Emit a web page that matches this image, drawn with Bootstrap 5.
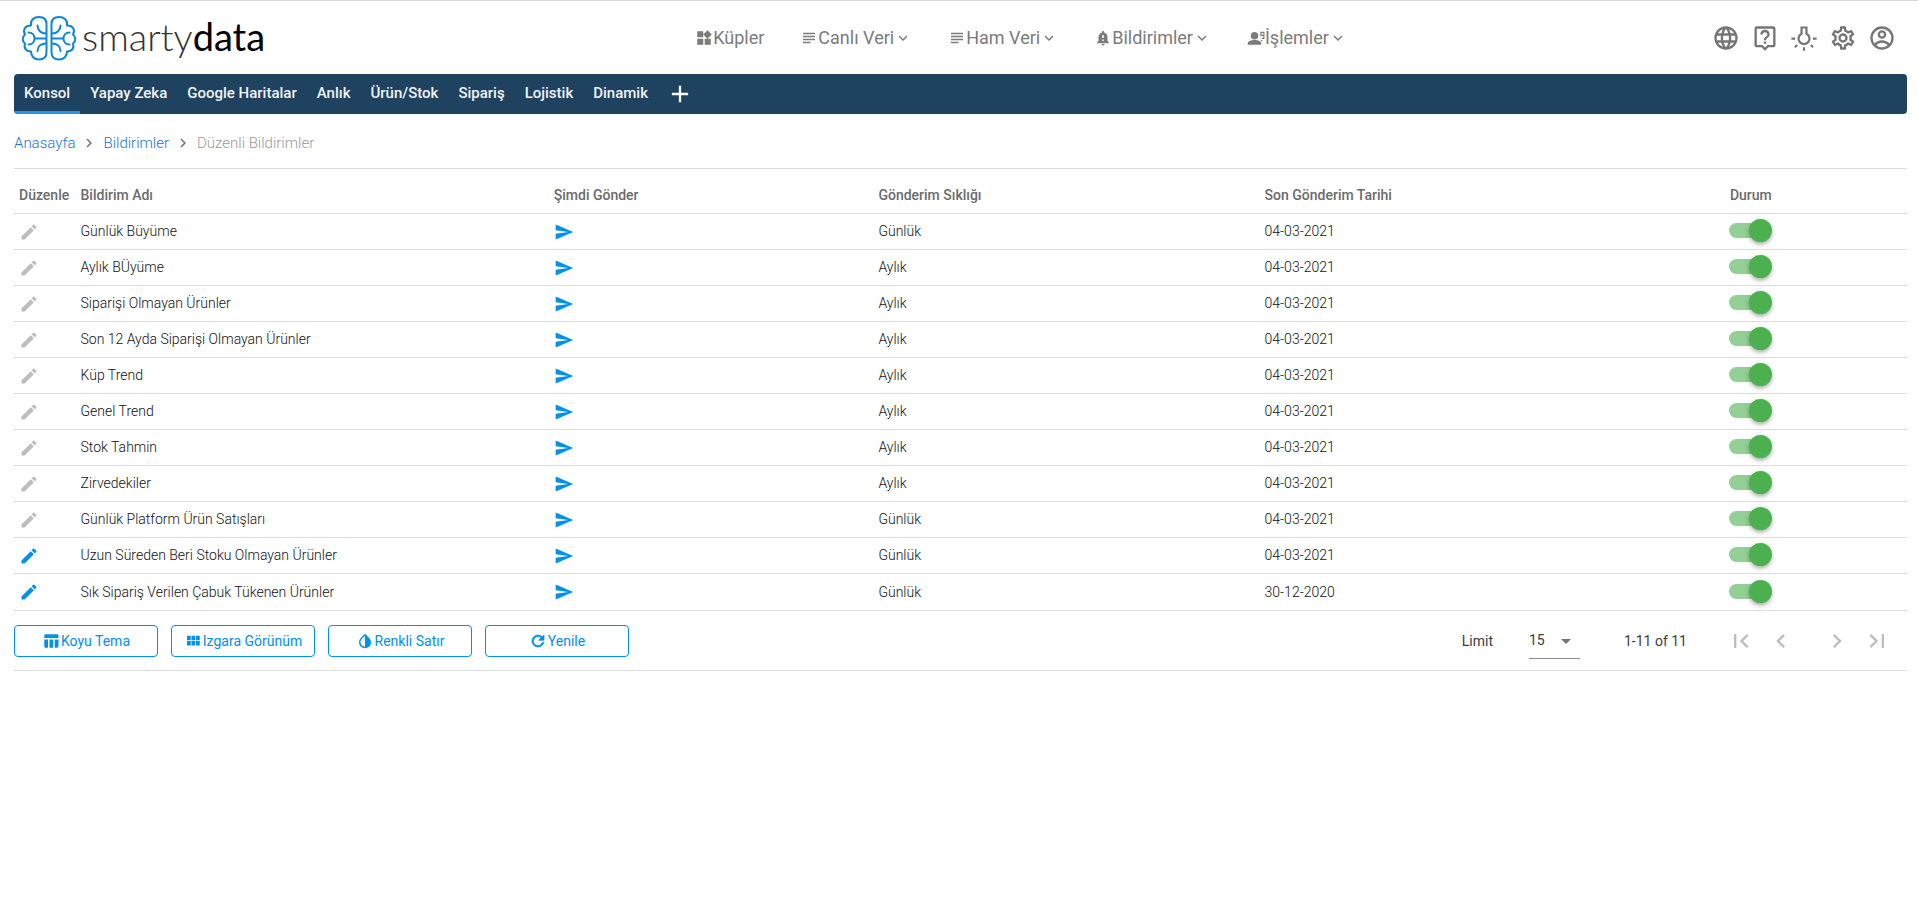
<!DOCTYPE html>
<html lang="tr">
<head>
<meta charset="utf-8">
<meta name="viewport" content="width=device-width, initial-scale=1">
<title>smartydata - Düzenli Bildirimler</title>
<link href="https://cdn.jsdelivr.net/npm/bootstrap@5.3.0/dist/css/bootstrap.min.css" rel="stylesheet">
<style>
  body { font-family: Roboto, "Noto Sans", sans-serif; font-size: 14px; line-height: 20px; color: #3c3c3c; background: #fff; border-top: 1px solid #d9d9de; }
  svg { fill: currentColor; flex: none; display: block; }
  .page { padding: 0 11px 0 14px; }
  .topbar { height: 73px; padding: 0 11px 0 6px; }
  .brand { color: #000; gap: 5px; margin-right: 65px; }
  .brand-text { font-family: Lato, sans-serif; font-size: 38px; line-height: 44px; padding-bottom: 4px; font-weight: 300; }
  .brand-text span { color: #333; }
  .brand-text b { font-weight: 400; }
  .main-menu { gap: 36px; }
  .main-menu .btn { font-size: 18px; line-height: 24px; color: #7b7b7b; }
  .tool-icons { gap: 11px; }
  .tool-icons .btn { color: #757575; }
  .tabs { background: #1e425f; border-radius: 4px; height: 40px; font-size: 15px; font-weight: 500; }
  .tabs a { color: #f1f4f6; padding: 2px 10px 0; line-height: 35px; border-bottom: 3px solid transparent; }
  .tabs a.active { border-color: #2196f3; }
  .crumbs { height: 54px; font-size: 15px; font-weight: 300; padding-top: 4px; }
  .crumbs a { color: #1976d2; }
  .crumbs .current { color: #999; }
  .crumbs svg { color: #757575; margin: 0 3px; }
  .grid { border-top: 1px solid #dcdcdc; table-layout: fixed; }
  .grid th { height: 45px; padding: 8px 5px 0; font-weight: 500; color: #6b6b6b; border-bottom: 1px solid #dcdcdc; }
  .grid td { height: 36px; padding: 0 5px 1px; border-bottom: 1px solid #dcdcdc; vertical-align: middle; white-space: nowrap; font-weight: 300; color: #111; }
  .grid tr:last-child td { height: 37px; }
  .icon-btn, .icon-btn:disabled { color: #0091ea; opacity: 1; }
  .icon-btn:disabled { color: #bdbdbd; }
  .toggle { appearance: none; display: block; width: 43px; height: 23px; margin: 0 auto 1px; position: relative; border-radius: 12px; }
  .toggle::before { content: ""; position: absolute; left: 0; top: 4px; width: 36px; height: 15px; border-radius: 8px; background: #94cf96; }
  .toggle::after { content: ""; position: absolute; right: 0; top: 0; width: 23px; height: 23px; border-radius: 50%; background: #4caf50; box-shadow: 0 3px 4px -1px rgba(0,0,0,.3), 0 1px 6px rgba(0,0,0,.14); }
  .grid-foot { height: 60px; border-bottom: 1px solid #dcdcdc; }
  .tool-group { gap: 13px; }
  .tool-btn { width: 144px; height: 32px; border: 1px solid #0091ea; border-radius: 4px; color: #0091ea; gap: 1px; font-size: 14px; line-height: 20px; }
  .limit-box { width: 51px; height: 36px; border: 0; border-bottom: 1px solid #8c8c8c; appearance: none; background: transparent; color: inherit; padding: 0; }
  .limit-wrap { position: relative; }
  .limit-wrap svg { position: absolute; right: 2px; top: 6px; color: #757575; pointer-events: none; }
  .pager { padding-right: 16px; }
  .pager .btn, .pager .btn:disabled { color: #bdbdbd; opacity: 1; }
  .page-prev { margin: 0 14px 0 12px; }
  .page-next { margin: 0 12px 0 14px; }
</style>
</head>
<body>
<svg class="d-none" aria-hidden="true">
  <symbol id="i-down" viewBox="0 0 24 24"><path d="M16.59 8.59 12 13.17 7.41 8.59 6 10l6 6 6-6z"/></symbol>
  <symbol id="i-right" viewBox="0 0 24 24"><path d="M10 6 8.59 7.41 13.17 12l-4.58 4.59L10 18l6-6z"/></symbol>
  <symbol id="i-left" viewBox="0 0 24 24"><path d="M15.41 7.41 14 6l-6 6 6 6 1.41-1.41L10.83 12z"/></symbol>
  <symbol id="i-subject" viewBox="0 0 24 24"><path d="M14 17H4v2h10v-2zm6-8H4v2h16V9zM4 15h16v-2H4v2zM4 5v2h16V5H4z"/></symbol>
  <symbol id="i-edit" viewBox="0 0 24 24"><path d="M3 17.25V21h3.75L17.81 9.94l-3.75-3.75L3 17.25zM20.71 7.04a1 1 0 0 0 0-1.41l-2.34-2.34a1 1 0 0 0-1.41 0l-1.83 1.83 3.75 3.75 1.83-1.83z"/></symbol>
  <symbol id="i-send" viewBox="0 0 24 24"><path d="M2.01 21 23 12 2.01 3 2 10l15 2-15 2z"/></symbol>
</svg>
<div class="page">
  <header class="topbar d-flex align-items-center justify-content-between">
    <a href="#" class="brand d-flex align-items-center text-decoration-none">
      <svg width="57" height="48" viewBox="0 0 57 48" style="fill:none" stroke="#0d87cf" stroke-width="2" stroke-linecap="round" stroke-linejoin="round">
        <g id="half">
          <path d="M26.500 10V38C26.500 43 23.500 45.500 19 45.500 14 45.500 11 42 11 37.500 6 37.500 3.500 34 5 29.500 2 27.500 2 23 5 20.500 2.500 16 5 11.500 11 11.500 10 6 14 3 19 3 23.500 3 26.500 5.500 26.500 10z"/>
          <path d="M26 24.500H14.500M8.500 18.500C12 18.500 14.500 21 14.500 24.500S12 30.500 8.500 30.500M17.500 11.500C17.500 16 21 19.500 26 19.500M17.500 37C17.500 32.500 21 29.500 26 29.500"/>
        </g>
        <use href="#half" transform="translate(58 0) scale(-1 1)"/>
      </svg>
      <span class="brand-text"><span>smarty</span><b>data</b></span>
    </a>
    <nav class="main-menu d-flex">
      <button class="btn p-0 border-0 d-flex align-items-center"><svg width="18" height="18" viewBox="0 0 24 24"><path d="M13 13v8h8v-8h-8zM3 21h8v-8H3v8zM3 3v8h8V3H3zm13.66-1.31L11 7.34 16.66 13l5.66-5.66-5.66-5.65z"/></svg>Küpler</button>
      <button class="btn p-0 border-0 d-flex align-items-center"><svg width="18" height="18"><use href="#i-subject"/></svg>Canlı Veri<svg width="18" height="18"><use href="#i-down"/></svg></button>
      <button class="btn p-0 border-0 d-flex align-items-center"><svg width="18" height="18"><use href="#i-subject"/></svg>Ham Veri<svg width="18" height="18"><use href="#i-down"/></svg></button>
      <button class="btn p-0 border-0 d-flex align-items-center"><svg width="18" height="18" viewBox="0 0 24 24"><path d="M18 16v-5c0-3.07-1.64-5.64-4.5-6.32V4a1.5 1.5 0 0 0-3 0v.68C7.63 5.36 6 7.92 6 11v5l-2 2v1h16v-1l-2-2zm-5 0h-2v-2h2v2zm0-4h-2V8h2v4zm-1 10a2 2 0 0 0 2-2h-4a2 2 0 0 0 2 2z"/></svg>Bildirimler<svg width="18" height="18"><use href="#i-down"/></svg></button>
      <button class="btn p-0 border-0 d-flex align-items-center"><svg width="18" height="18" viewBox="0 0 24 24"><circle cx="10" cy="9" r="5"/><path d="M1 21v-2c0-3 5-4.500 9-4.500s9 1.500 9 4.500v2z"/><path d="M18.500 4.500h4v4h-4zM22.500 8.500v4h-3M18.500 15.500h2" fill="none" stroke="currentColor" stroke-width="1.500"/></svg>İşlemler<svg width="18" height="18"><use href="#i-down"/></svg></button>
    </nav>
    <div class="tool-icons d-flex">
      <button class="btn p-0 border-0" aria-label="Dil"><svg width="28" height="28" viewBox="0 0 24 24"><path d="M11.99 2C6.47 2 2 6.48 2 12s4.47 10 9.99 10C17.52 22 22 17.52 22 12S17.520 2 11.990 2zm6.930 6h-2.950a15.650 15.650 0 0 0-1.380-3.560A8.030 8.030 0 0 1 18.920 8zM12 4.040c.830 1.200 1.480 2.530 1.910 3.960h-3.820c.430-1.430 1.080-2.760 1.910-3.960zM4.260 14C4.100 13.360 4 12.690 4 12s.100-1.360.260-2h3.380c-.080.660-.140 1.320-.140 2s.060 1.340.140 2H4.260zm.820 2h2.950c.320 1.250.780 2.450 1.380 3.560A7.990 7.990 0 0 1 5.080 16zm2.950-8H5.080a7.990 7.990 0 0 1 4.330-3.560A15.650 15.650 0 0 0 8.030 8zM12 19.960c-.830-1.200-1.480-2.530-1.910-3.960h3.820c-.430 1.430-1.080 2.760-1.910 3.960zM14.340 14H9.660c-.090-.660-.160-1.320-.160-2s.070-1.350.160-2h4.680c.090.650.160 1.320.160 2s-.070 1.340-.160 2zm.250 5.560c.600-1.110 1.060-2.310 1.380-3.560h2.950a8.030 8.030 0 0 1-4.330 3.560zM16.360 14c.080-.660.140-1.320.140-2s-.060-1.340-.140-2h3.380c.160.640.260 1.310.260 2s-.100 1.360-.260 2h-3.380z"/></svg></button>
      <button class="btn p-0 border-0" aria-label="Yardım"><svg width="28" height="28" viewBox="0 0 24 24"><path d="M19 2H5a2 2 0 0 0-2 2v14c0 1.100.900 2 2 2h4l3 3 3-3h4c1.100 0 2-.900 2-2V4c0-1.100-.900-2-2-2zm0 16h-4.830L12 20.170 9.830 18H5V4h14v14zm-8-3h2v2h-2zm1-8c1.100 0 2 .900 2 2 0 2-3 1.750-3 5h2c0-2.250 3-2.500 3-5 0-2.210-1.790-4-4-4S8 6.790 8 9h2c0-1.100.900-2 2-2z"/></svg></button>
      <button class="btn p-0 border-0" aria-label="Tema"><svg width="28" height="28" viewBox="0 0 24 24"><path d="M9.900 3v5.300a4.700 4.700 0 1 0 4.200 0V3z" fill="none" stroke="currentColor" stroke-width="1.900"/><path d="M11.100 20h1.800v3h-1.800zM1.200 11.600h3.200v1.800H1.200zM19.600 11.600h3.200v1.800h-3.200zM17.200 18.600l1.300-1.300 1.900 1.900-1.300 1.300zM6.800 18.600l-1.300-1.300-1.900 1.900 1.300 1.300z"/></svg></button>
      <button class="btn p-0 border-0" aria-label="Ayarlar"><svg width="28" height="28" viewBox="0 0 24 24"><path d="M19.430 12.980c.040-.320.070-.640.070-.980s-.030-.660-.070-.980l2.110-1.650c.190-.150.240-.420.120-.640l-2-3.460a.500.500 0 0 0-.610-.220l-2.490 1a7.300 7.300 0 0 0-1.690-.980l-.380-2.650A.49.49 0 0 0 14 2h-4a.49.49 0 0 0-.490.420l-.380 2.650c-.610.250-1.170.590-1.690.980l-2.490-1a.500.500 0 0 0-.610.220l-2 3.460c-.130.220-.070.490.120.640l2.110 1.650a7.930 7.930 0 0 0 0 1.960l-2.110 1.650a.500.500 0 0 0-.120.640l2 3.460c.120.220.390.290.610.220l2.490-1c.520.400 1.080.730 1.690.980l.380 2.650c.030.240.240.420.490.420h4c.250 0 .460-.180.490-.420l.380-2.650c.610-.250 1.170-.590 1.690-.980l2.490 1c.230.090.490 0 .610-.220l2-3.460a.500.500 0 0 0-.120-.640l-2.110-1.650zm-1.980-1.710c.040.310.050.520.050.730 0 .210-.020.430-.050.730l-.140 1.130.890.700 1.080.840-.700 1.210-1.270-.510-1.040-.420-.900.680c-.430.320-.840.560-1.250.730l-1.060.430-.160 1.130-.200 1.350h-1.400l-.190-1.350-.160-1.130-1.060-.430a5.670 5.670 0 0 1-1.230-.710l-.910-.700-1.060.430-1.270.510-.700-1.210 1.080-.840.890-.700-.140-1.130c-.030-.310-.050-.540-.050-.740s.020-.430.050-.730l.140-1.130-.890-.700-1.080-.840.700-1.210 1.270.510 1.040.420.900-.680c.430-.320.840-.560 1.250-.730l1.060-.430.160-1.130.200-1.350h1.390l.190 1.350.160 1.130 1.060.430c.430.180.830.410 1.230.710l.910.700 1.060-.430 1.270-.510.700 1.210-1.070.850-.890.700.140 1.130zM12 8a4 4 0 1 0 0 8 4 4 0 0 0 0-8zm0 6a2 2 0 1 1 0-4 2 2 0 0 1 0 4z"/></svg></button>
      <button class="btn p-0 border-0" aria-label="Hesap"><svg width="28" height="28" viewBox="0 0 24 24"><g fill="none" stroke="currentColor" stroke-width="2"><circle cx="12" cy="12" r="9"/><circle cx="12" cy="9" r="2.700"/><path d="M5.500 18c2-2 4-3 6.500-3s4.500 1 6.500 3"/></g></svg></button>
    </div>
  </header>

  <nav class="tabs d-flex overflow-hidden">
    <a href="#" class="active text-decoration-none">Konsol</a>
    <a href="#" class="text-decoration-none">Yapay Zeka</a>
    <a href="#" class="text-decoration-none">Google Haritalar</a>
    <a href="#" class="text-decoration-none">Anlık</a>
    <a href="#" class="text-decoration-none">Ürün/Stok</a>
    <a href="#" class="text-decoration-none">Sipariş</a>
    <a href="#" class="text-decoration-none">Lojistik</a>
    <a href="#" class="text-decoration-none">Dinamik</a>
    <button class="btn p-0 border-0 ms-2 text-white" aria-label="Sekme ekle"><svg width="28" height="28" viewBox="0 0 24 24"><path d="M19 13h-6v6h-2v-6H5v-2h6V5h2v6h6z"/></svg></button>
  </nav>

  <nav class="crumbs d-flex align-items-center" aria-label="Konum">
    <a href="#" class="text-decoration-none">Anasayfa</a><svg width="22" height="18"><use href="#i-right"/></svg>
    <a href="#" class="text-decoration-none">Bildirimler</a><svg width="22" height="18"><use href="#i-right"/></svg>
    <span class="current">Düzenli Bildirimler</span>
  </nav>

  <table class="grid w-100">
    <colgroup><col style="width:3.25%"><col style="width:25%"><col style="width:17.15%"><col style="width:20.4%"><col style="width:17.7%"><col></colgroup>
    <thead><tr><th>Düzenle</th><th>Bildirim Adı</th><th>Şimdi Gönder</th><th>Gönderim Sıklığı</th><th>Son Gönderim Tarihi</th><th class="text-center">Durum</th></tr></thead>
    <tbody id="rows"></tbody>
  </table>

  <div class="grid-foot d-flex align-items-center justify-content-between">
    <div class="tool-group d-flex">
      <button class="btn tool-btn p-0 d-flex align-items-center justify-content-center"><svg width="18" height="18" viewBox="0 0 24 24"><path d="M10 10.020h5V21h-5zM17 21h3c1.100 0 2-.900 2-2v-9h-5v11zm3-18H5c-1.100 0-2 .900-2 2v3h19V5c0-1.100-.900-2-2-2zM3 19c0 1.100.900 2 2 2h3V10H3v9z"/></svg>Koyu Tema</button>
      <button class="btn tool-btn p-0 d-flex align-items-center justify-content-center"><svg width="18" height="18" viewBox="0 0 24 24"><path d="M4 11h5V5H4v6zm0 7h5v-6H4v6zm6 0h5v-6h-5v6zm6 0h5v-6h-5v6zm-6-7h5V5h-5v6zm6-6v6h5V5h-5z"/></svg>Izgara Görünüm</button>
      <button class="btn tool-btn p-0 d-flex align-items-center justify-content-center"><svg width="18" height="18" viewBox="0 0 24 24"><path d="M17.660 7.930 12 2.270 6.340 7.930a8 8 0 1 0 11.320 0zM12 19.590A6 6 0 0 1 7.760 9.350L12 5.100v14.490z"/></svg>Renkli Satır</button>
      <button class="btn tool-btn p-0 d-flex align-items-center justify-content-center"><svg width="18" height="18" viewBox="0 0 24 24"><path d="M17.650 6.350A7.960 7.960 0 0 0 12 4a8 8 0 1 0 7.730 10h-2.080A6 6 0 1 1 12 6c1.660 0 3.140.690 4.220 1.780L13 11h7V4l-2.350 2.350z" stroke="currentColor"/></svg>Yenile</button>
    </div>
    <div class="pager d-flex align-items-center">
      <label for="limit" class="me-2 pe-1">Limit</label>
      <div class="limit-wrap ms-4 me-1"><select id="limit" class="limit-box"><option>15</option><option>25</option><option>50</option></select><svg width="24" height="24" viewBox="0 0 24 24"><path d="m7 10 5 5 5-5z"/></svg></div>
      <span class="mx-4 px-3">1-11 of 11</span>
      <button disabled class="btn p-0 border-0" aria-label="İlk sayfa"><svg width="28" height="28" viewBox="0 0 24 24"><path d="M18.410 16.590 13.820 12l4.590-4.590L17 6l-6 6 6 6zM6 6h2v12H6z"/></svg></button>
      <button disabled class="btn p-0 border-0 page-prev" aria-label="Önceki"><svg width="28" height="28"><use href="#i-left"/></svg></button>
      <button disabled class="btn p-0 border-0 page-next" aria-label="Sonraki"><svg width="28" height="28"><use href="#i-right"/></svg></button>
      <button disabled class="btn p-0 border-0" aria-label="Son sayfa"><svg width="28" height="28" viewBox="0 0 24 24"><path d="M5.590 7.410 10.180 12l-4.590 4.590L7 18l6-6-6-6zM16 6h2v12h-2z"/></svg></button>
    </div>
  </div>
</div>
<script src="https://cdn.jsdelivr.net/npm/bootstrap@5.3.0/dist/js/bootstrap.bundle.min.js"></script>
<script>
  const rows = [
    ["Günlük Büyüme", "Günlük", "04-03-2021"],
    ["Aylık BÜyüme", "Aylık", "04-03-2021"],
    ["Siparişi Olmayan Ürünler", "Aylık", "04-03-2021"],
    ["Son 12 Ayda Siparişi Olmayan Ürünler", "Aylık", "04-03-2021"],
    ["Küp Trend", "Aylık", "04-03-2021"],
    ["Genel Trend", "Aylık", "04-03-2021"],
    ["Stok Tahmin", "Aylık", "04-03-2021"],
    ["Zirvedekiler", "Aylık", "04-03-2021"],
    ["Günlük Platform Ürün Satışları", "Günlük", "04-03-2021"],
    ["Uzun Süreden Beri Stoku Olmayan Ürünler", "Günlük", "04-03-2021", true],
    ["Sık Sipariş Verilen Çabuk Tükenen Ürünler", "Günlük", "30-12-2020", true]
  ];
  document.getElementById("rows").innerHTML = rows.map(([name, freq, date, editable]) => `
    <tr>
      <td><button class="btn icon-btn p-0 border-0" ${editable ? "" : "disabled"} aria-label="Düzenle"><svg width="20" height="20"><use href="#i-edit"/></svg></button></td>
      <td>${name}</td>
      <td><button class="btn icon-btn p-0 border-0" aria-label="Şimdi gönder"><svg width="20" height="20"><use href="#i-send"/></svg></button></td>
      <td>${freq}</td>
      <td>${date}</td>
      <td><input type="checkbox" role="switch" class="toggle" checked aria-label="${name}"></td>
    </tr>`).join("");
</script>
</body>
</html>
